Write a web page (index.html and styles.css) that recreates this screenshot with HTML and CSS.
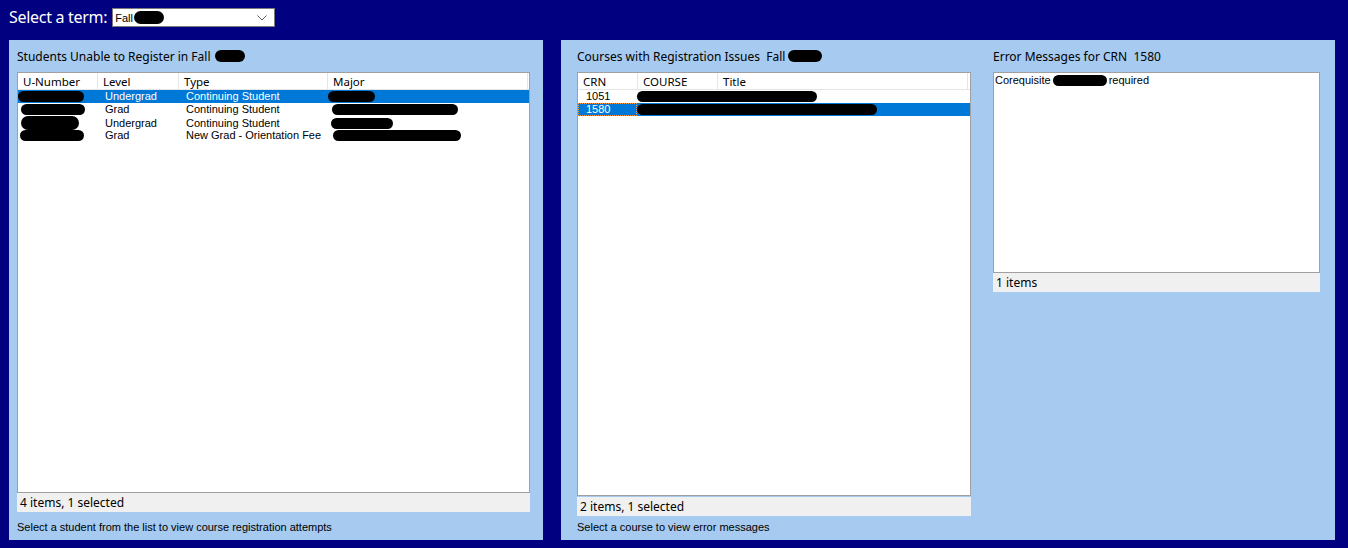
FILE: index.html
```html
<!DOCTYPE html>
<html>
<head>
<meta charset="utf-8">
<link rel="stylesheet" href="styles.css">
</head>
<body>
<div class="topbar">
  <span class="term-label">Select a term:</span>
  <div class="combo">
    <span class="combo-text">Fall <span class="blob blob-combo"></span></span>
    <svg class="chev" width="10" height="6" viewBox="0 0 10 6"><path d="M0.5 0.5 L5 5 L9.5 0.5" fill="none" stroke="#606060" stroke-width="1"/></svg>
  </div>
</div>
<div class="main">
  <section class="panel panel-left">
    <div class="title">Students Unable to Register in Fall <span class="blob blob-title"></span></div>
    <div class="listbox">
      <div class="hdr hdr-students">
        <div class="hc">U-Number</div>
        <div class="hc">Level</div>
        <div class="hc">Type</div>
        <div class="hc">Major</div>
      </div>
      <div class="row row-students sel">
        <div class="c"><span class="blob" style="width:66px"></span></div>
        <div class="c">Undergrad</div>
        <div class="c">Continuing Student</div>
        <div class="c"><span class="blob" style="width:47px"></span></div>
      </div>
      <div class="row row-students">
        <div class="c"><span class="blob" style="width:64px;margin-left:3px"></span></div>
        <div class="c">Grad</div>
        <div class="c">Continuing Student</div>
        <div class="c"><span class="blob" style="width:126px;margin-left:4px"></span></div>
      </div>
      <div class="row row-students">
        <div class="c"><span class="blob blob-tall" style="width:58px;margin-left:3px"></span></div>
        <div class="c">Undergrad</div>
        <div class="c">Continuing Student</div>
        <div class="c"><span class="blob" style="width:62px;margin-left:3px"></span></div>
      </div>
      <div class="row row-students">
        <div class="c"><span class="blob" style="width:64px;margin-left:2px"></span></div>
        <div class="c">Grad</div>
        <div class="c">New Grad - Orientation Fee</div>
        <div class="c"><span class="blob" style="width:128px;margin-left:5px"></span></div>
      </div>
    </div>
    <div class="status">4 items, 1 selected</div>
    <div class="footer">Select a student from the list to view course registration attempts</div>
  </section>
  <section class="panel panel-right">
    <div class="col col-courses">
      <div class="title">Courses with Registration Issues&nbsp; Fall <span class="blob blob-title2"></span></div>
      <div class="listbox">
        <div class="hdr hdr-courses">
          <div class="hc">CRN</div>
          <div class="hc">COURSE</div>
          <div class="hc">Title</div>
          <div class="hc"></div>
        </div>
        <div class="row row-courses">
          <div class="c c-crn">1051</div>
          <div class="c c-span"><span class="blob" style="width:180px"></span></div>
        </div>
        <div class="row row-courses sel">
          <div class="c c-crn focus">1580</div>
          <div class="c c-span"><span class="blob" style="width:240px"></span></div>
        </div>
      </div>
      <div class="status">2 items, 1 selected</div>
      <div class="footer footer-courses">Select a course to view error messages</div>
    </div>
    <div class="col col-errors">
      <div class="title">Error Messages for CRN&nbsp; 1580</div>
      <div class="listbox listbox-errors">
        <div class="row row-err">Corequisite <span class="blob" style="width:54px"></span> required</div>
      </div>
      <div class="status">1 items</div>
    </div>
  </section>
</div>
</body>
</html>
```
FILE: styles.css
```css
html, body {
  margin: 0;
  padding: 0;
}
body {
  background: #000080;
  width: 1348px;
  height: 548px;
  overflow: hidden;
  font-family: "Noto Sans", "Open Sans", sans-serif;
}
.topbar {
  height: 32px;
  padding: 8px 0 0 9px;
  display: flex;
  align-items: flex-start;
  box-sizing: content-box;
}
.term-label {
  color: #ffffff;
  font-size: 16px;
  line-height: 19px;
  margin-right: 5px;
  letter-spacing: -0.3px;
}
.combo {
  height: 17px;
  background: #fff;
  border: 1px solid #7a7a7a;
  display: flex;
  align-items: center;
  justify-content: space-between;
  padding: 0 7px 0 2px;
  box-sizing: content-box;
  width: 152px;
}
.combo-text {
  font-family: "Liberation Sans", Arial, sans-serif;
  font-size: 11px;
  color: #000;
  display: flex;
  align-items: center;
}
.blob {
  display: inline-block;
  height: 11px;
  background: #000;
  border-radius: 6px;
  vertical-align: middle;
}
.blob-tall { height: 14px; border-radius: 7px; }
.blob-combo { width: 30px; height: 13px; margin-left: 1px; border-radius: 7px; }
.blob-title { width: 30px; height: 12px; border-radius: 6px; margin-left: 1px; }
.blob-title2 { width: 34px; height: 12px; border-radius: 6px; }
.main {
  display: flex;
  gap: 18px;
  padding-left: 9px;
  height: 500px;
}
.panel {
  background: #a6caf0;
  height: 500px;
  box-sizing: border-box;
}
.panel-left {
  width: 534px;
  padding: 0 13px 0 8px;
  display: flex;
  flex-direction: column;
}
.panel-right {
  width: 774px;
  padding: 0 15px 0 16px;
  display: flex;
  gap: 22px;
}
.col {
  display: flex;
  flex-direction: column;
}
.col-courses { width: 394px; }
.col-errors { width: 327px; }
.title {
  height: 32px;
  display: flex;
  align-items: center;
  font-size: 12px;
  color: #000;
  white-space: pre;
  gap: 0;
}
.listbox {
  flex: 1;
  background: #fff;
  border: 1px solid #a0a0a0;
  overflow: hidden;
}
.listbox-errors {
  flex: none;
  height: 201px;
  box-sizing: border-box;
  padding-top: 1px;
}
.hdr {
  display: grid;
  height: 17px;
  border-bottom: 1px solid #e5e5e5;
  box-sizing: border-box;
  font-size: 11.5px;
  color: #000;
}
.hdr-students { grid-template-columns: 80px 81px 149px 200px; }
.hdr-courses { grid-template-columns: 60px 80px 250px 1fr; }
.hc {
  padding-left: 5px;
  border-right: 1px solid #e5e5e5;
  line-height: 17px;
  white-space: nowrap;
}
.row {
  display: grid;
  height: 13px;
  font-family: "Liberation Sans", Arial, sans-serif;
  font-size: 11px;
  line-height: 13px;
  color: #000;
  white-space: nowrap;
}
.row-students { grid-template-columns: 80px 81px 149px 200px; }
.row-students .c:nth-child(2),
.row-students .c:nth-child(3) { padding-left: 7px; }
.row-courses { grid-template-columns: 59px 1fr; }
.c-crn { padding-left: 8px; box-sizing: border-box; }
.focus { outline: 1px dotted #ff9a3c; outline-offset: -1px; }
.c { display: flex; align-items: center; }
.sel { background: #0078d7; color: #fff; }
.row-err {
  display: flex;
  align-items: center;
  padding-left: 1px;
  gap: 2px;
}
.status {
  height: 19px;
  background: #f0f0f0;
  font-size: 12px;
  line-height: 20px;
  padding-left: 3px;
  color: #000;
  flex: none;
}
.col-courses .status { margin-top: 1px; }
.footer {
  height: 28px;
  display: flex;
  align-items: center;
  padding-top: 1px;
  box-sizing: border-box;
  font-family: "Liberation Sans", Arial, sans-serif;
  font-size: 11px;
  color: #000;
  flex: none;
}
.footer-courses { height: 24px; align-items: flex-start; padding-top: 5px; }
```
